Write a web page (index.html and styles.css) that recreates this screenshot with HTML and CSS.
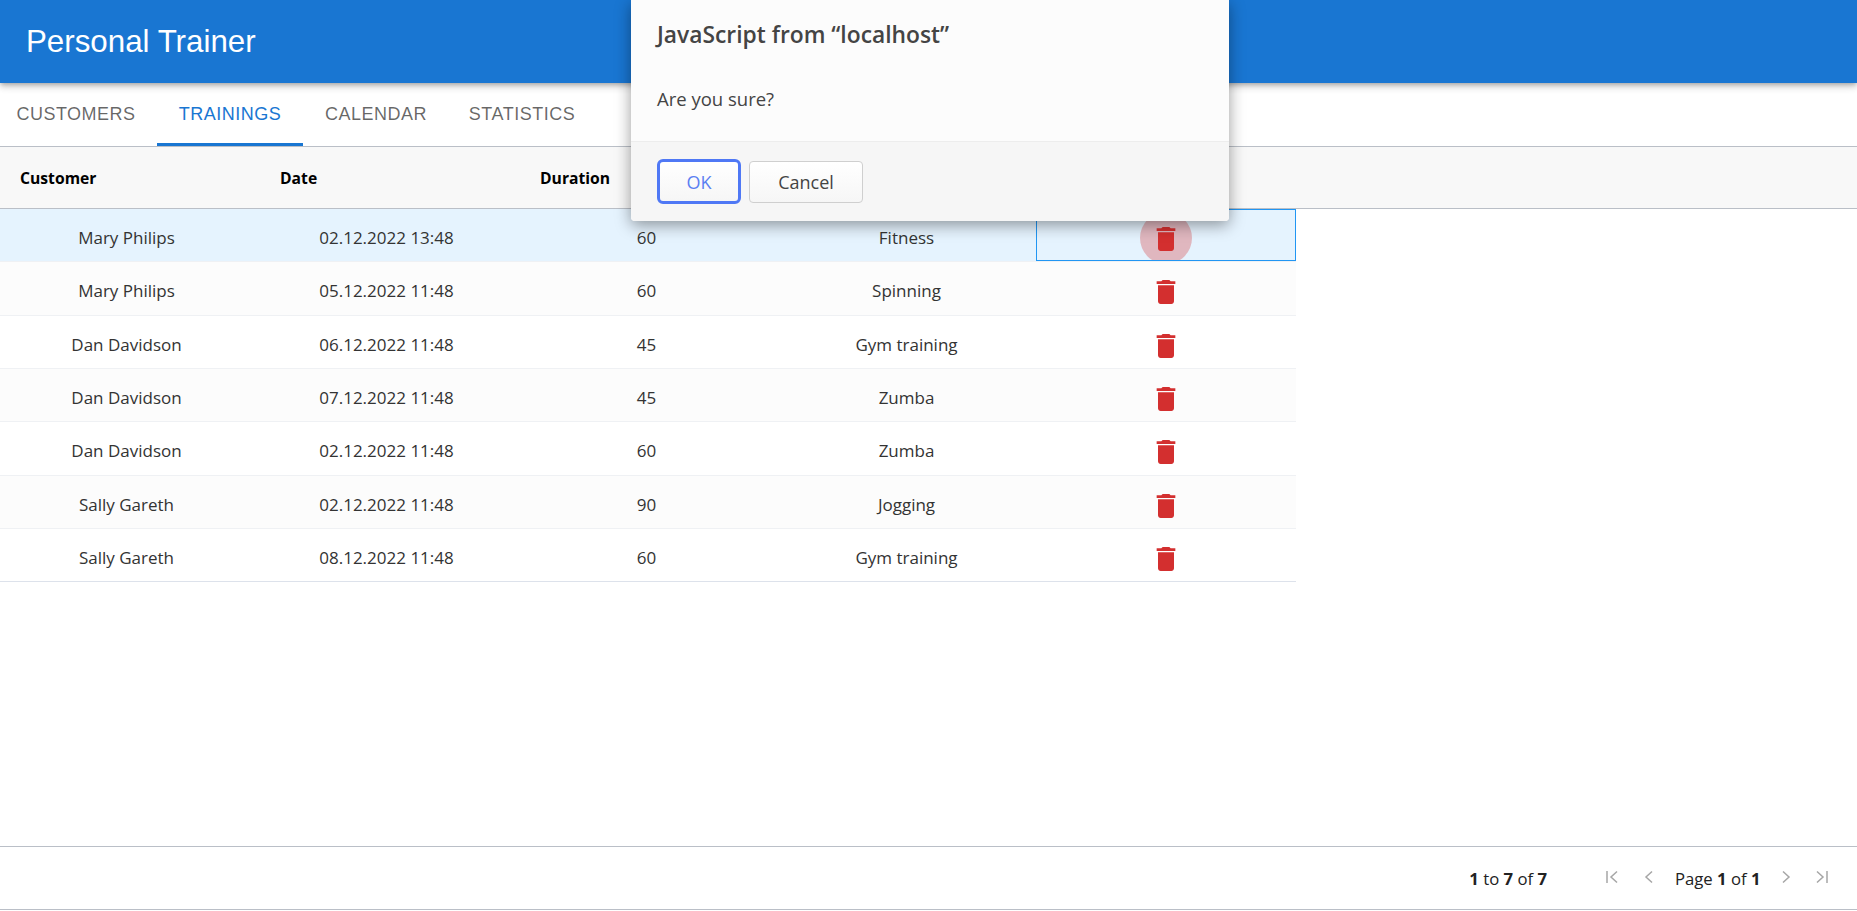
FILE: index.html
```html
<!DOCTYPE html>
<html lang="en">
    <head>
        <meta charset="UTF-8" />
        <title>Personal Trainer</title>
        <link rel="stylesheet" href="styles.css">
    </head>
    <body>
        <div class="app">
            <header class="appbar">
                <h1 class="appbar-title">Personal Trainer</h1>
            </header>

            <nav class="tabs">
                <a class="tab tab-first">CUSTOMERS</a>
                <a class="tab tab-active">TRAININGS</a>
                <a class="tab">CALENDAR</a>
                <a class="tab">STATISTICS</a>
            </nav>

            <div class="grid">
                <div class="grid-header">
                    <div class="header-cell">Customer</div>
                    <div class="header-cell">Date</div>
                    <div class="header-cell">Duration</div>
                </div>

                <div class="grid-body">
                    <div class="row row-selected">
                        <div class="cell">Mary Philips</div>
                        <div class="cell">02.12.2022 13:48</div>
                        <div class="cell">60</div>
                        <div class="cell">Fitness</div>
                        <div class="cell-action cell-focus">
                            <button class="delete-btn delete-btn-pressed"><svg class="delete-icon" viewBox="0 0 24 24"><path d="M6 19c0 1.1.9 2 2 2h8c1.1 0 2-.9 2-2V7H6v12zM19 4h-3.5l-1-1h-5l-1 1H5v2h14V4z"/></svg></button>
                        </div>
                    </div>
                    <div class="row row-odd">
                        <div class="cell">Mary Philips</div>
                        <div class="cell">05.12.2022 11:48</div>
                        <div class="cell">60</div>
                        <div class="cell">Spinning</div>
                        <div class="cell-action">
                            <button class="delete-btn"><svg class="delete-icon" viewBox="0 0 24 24"><path d="M6 19c0 1.1.9 2 2 2h8c1.1 0 2-.9 2-2V7H6v12zM19 4h-3.5l-1-1h-5l-1 1H5v2h14V4z"/></svg></button>
                        </div>
                    </div>
                    <div class="row">
                        <div class="cell">Dan Davidson</div>
                        <div class="cell">06.12.2022 11:48</div>
                        <div class="cell">45</div>
                        <div class="cell">Gym training</div>
                        <div class="cell-action">
                            <button class="delete-btn"><svg class="delete-icon" viewBox="0 0 24 24"><path d="M6 19c0 1.1.9 2 2 2h8c1.1 0 2-.9 2-2V7H6v12zM19 4h-3.5l-1-1h-5l-1 1H5v2h14V4z"/></svg></button>
                        </div>
                    </div>
                    <div class="row row-odd">
                        <div class="cell">Dan Davidson</div>
                        <div class="cell">07.12.2022 11:48</div>
                        <div class="cell">45</div>
                        <div class="cell">Zumba</div>
                        <div class="cell-action">
                            <button class="delete-btn"><svg class="delete-icon" viewBox="0 0 24 24"><path d="M6 19c0 1.1.9 2 2 2h8c1.1 0 2-.9 2-2V7H6v12zM19 4h-3.5l-1-1h-5l-1 1H5v2h14V4z"/></svg></button>
                        </div>
                    </div>
                    <div class="row">
                        <div class="cell">Dan Davidson</div>
                        <div class="cell">02.12.2022 11:48</div>
                        <div class="cell">60</div>
                        <div class="cell">Zumba</div>
                        <div class="cell-action">
                            <button class="delete-btn"><svg class="delete-icon" viewBox="0 0 24 24"><path d="M6 19c0 1.1.9 2 2 2h8c1.1 0 2-.9 2-2V7H6v12zM19 4h-3.5l-1-1h-5l-1 1H5v2h14V4z"/></svg></button>
                        </div>
                    </div>
                    <div class="row row-odd">
                        <div class="cell">Sally Gareth</div>
                        <div class="cell">02.12.2022 11:48</div>
                        <div class="cell">90</div>
                        <div class="cell">Jogging</div>
                        <div class="cell-action">
                            <button class="delete-btn"><svg class="delete-icon" viewBox="0 0 24 24"><path d="M6 19c0 1.1.9 2 2 2h8c1.1 0 2-.9 2-2V7H6v12zM19 4h-3.5l-1-1h-5l-1 1H5v2h14V4z"/></svg></button>
                        </div>
                    </div>
                    <div class="row">
                        <div class="cell">Sally Gareth</div>
                        <div class="cell">08.12.2022 11:48</div>
                        <div class="cell">60</div>
                        <div class="cell">Gym training</div>
                        <div class="cell-action">
                            <button class="delete-btn"><svg class="delete-icon" viewBox="0 0 24 24"><path d="M6 19c0 1.1.9 2 2 2h8c1.1 0 2-.9 2-2V7H6v12zM19 4h-3.5l-1-1h-5l-1 1H5v2h14V4z"/></svg></button>
                        </div>
                    </div>
                </div>

                <div class="paging">
                    <span class="paging-count"><b>1</b> to <b>7</b> of <b>7</b></span>
                    <svg class="paging-icon paging-first" viewBox="0 0 12 14"><path d="M1 1v12M11 1.500 5 7l6 5.500"/></svg>
                    <svg class="paging-icon paging-prev" viewBox="0 0 9 14"><path d="M8 1.500 2 7l6 5.500"/></svg>
                    <span class="paging-page">Page <b>1</b> of <b>1</b></span>
                    <svg class="paging-icon paging-next" viewBox="0 0 9 14"><path d="M1 1.500 7 7l-6 5.500"/></svg>
                    <svg class="paging-icon paging-last" viewBox="0 0 12 14"><path d="M11 1v12M1 1.500 7 7l-6 5.500"/></svg>
                </div>
            </div>
        </div>

        <div class="dialog">
            <div class="dialog-main">
                <h2 class="dialog-title">JavaScript from “localhost”</h2>
                <p class="dialog-text">Are you sure?</p>
            </div>
            <div class="dialog-footer">
                <button class="dialog-btn dialog-ok">OK</button>
                <button class="dialog-btn">Cancel</button>
            </div>
        </div>
    </body>
</html>
```

FILE: styles.css
```css
* {
    box-sizing: border-box;
}

body {
    margin: 0;
    font-family: "Open Sans", "Noto Sans", sans-serif;
    background-color: #fff;
    color: #181d1f;
    overflow: hidden;
}

.app {
    height: 911px;
    display: flex;
    flex-direction: column;
}

.appbar {
    height: 83px;
    flex: none;
    display: flex;
    align-items: center;
    padding-left: 26px;
    background-color: #1976d2;
    box-shadow: 0 2px 4px -1px rgba(0, 0, 0, 0.2), 0 4px 6px 0 rgba(0, 0, 0, 0.14), 0 1px 11px 0 rgba(0, 0, 0, 0.12);
    position: relative;
}

.appbar-title {
    margin: 0;
    font-family: "Liberation Sans", Arial, sans-serif;
    font-size: 31.300px;
    font-weight: 400;
    color: #fff;
}

.tabs {
    height: 64px;
    flex: none;
    display: flex;
    border-bottom: 1px solid #babfc7;
    font-family: "Liberation Sans", Arial, sans-serif;
}

.tab {
    width: 146px;
    height: 63px;
    display: flex;
    align-items: center;
    justify-content: center;
    font-size: 18px;
    letter-spacing: 0.5px;
    color: rgba(0, 0, 0, 0.6);
    padding-bottom: 1px;
}

.tab-first {
    width: 157px;
    padding-right: 5px;
}

.tab-active {
    color: #1976d2;
    border-bottom: 3px solid #1976d2;
    padding-bottom: 0;
    padding-top: 2px;
}

.grid {
    flex: 1;
    display: flex;
    flex-direction: column;
    border-bottom: 1px solid #babfc7;
    margin-bottom: 1px;
}

.grid-header {
    height: 62px;
    flex: none;
    display: grid;
    grid-template-columns: repeat(5, 260px);
    align-items: center;
    background-color: #f8f8f8;
    border-bottom: 1px solid #babfc7;
}

.header-cell {
    justify-self: start;
    margin-left: 20px;
    font-size: 15.700px;
    font-weight: 700;
    color: #000;
}

.grid-body {
    flex: 1;
    width: 1296px;
}

.row {
    height: 53.33px;
    display: grid;
    grid-template-columns: 260px 260px 260px 256px 260px;
    border-bottom: 1px solid #eff1f4;
    background-color: #fff;
}

.row:last-child {
    border-bottom-color: #dde2eb;
}

.row-odd {
    background-color: #fcfcfc;
}

.row-selected {
    background-color: #e5f3fe;
}

.cell {
    display: flex;
    align-items: center;
    justify-content: center;
    padding-right: 7px;
    padding-top: 4.500px;
    font-size: 17px;
    color: #333;
}

.cell:nth-child(4) {
    padding-right: 3px;
}

.cell-action {
    display: flex;
    align-items: flex-start;
    justify-content: center;
    padding-top: 3px;
    overflow: hidden;
}

.cell-focus {
    border: 1px solid #2196f3;
    padding-top: 2px;
}

.delete-btn {
    width: 52px;
    height: 52px;
    flex: none;
    display: flex;
    align-items: center;
    justify-content: center;
    padding: 2px 0 0;
    border: 0;
    border-radius: 50%;
    background: none;
}

.delete-btn-pressed {
    background-color: rgba(211, 47, 47, 0.3);
}

.delete-icon {
    width: 32px;
    height: 32px;
    fill: #d32f2f;
}

.paging {
    height: 63px;
    flex: none;
    display: flex;
    align-items: center;
    justify-content: flex-end;
    padding-right: 29px;
    border-top: 1px solid #babfc7;
    font-size: 16.700px;
    color: #222;
}

.paging b {
    font-weight: 700;
}

.paging-count {
    margin-right: 59px;
}

.paging-icon {
    height: 14px;
    margin-bottom: 3px;
    fill: none;
    stroke: #a6a6a6;
    stroke-width: 1.500;
}

.paging-first {
    width: 12px;
}

.paging-prev,
.paging-next {
    width: 9px;
}

.paging-prev {
    margin-left: 26px;
}

.paging-page {
    margin: 0 21.500px 0 22px;
}

.paging-last {
    width: 12px;
    margin-left: 25px;
}

.dialog {
    position: absolute;
    top: 0;
    left: 631px;
    width: 598px;
    height: 221px;
    display: flex;
    flex-direction: column;
    background-color: #fcfcfc;
    border-radius: 0 0 4px 4px;
    box-shadow: 0 4px 16px rgba(0, 0, 0, 0.4);
    overflow: hidden;
}

.dialog-main {
    height: 142px;
    flex: none;
    padding: 19px 26px 0;
    border-bottom: 1px solid #ededed;
}

.dialog-title {
    margin: 0;
    font-size: 22.800px;
    line-height: 32px;
    font-weight: 600;
    color: #444;
}

.dialog-text {
    margin: 36px 0 0;
    font-size: 18.500px;
    line-height: 24px;
    color: #444;
}

.dialog-footer {
    flex: 1;
    display: flex;
    align-items: center;
    gap: 8px;
    padding: 0 26px;
    background-color: #f6f6f6;
}

.dialog-btn {
    width: 114px;
    height: 42px;
    font-family: inherit;
    font-size: 18px;
    color: #444;
    background: linear-gradient(#fff, #f6f6f6);
    border: 1px solid #cfcfcf;
    border-radius: 4px;
}

.dialog-ok {
    width: 84px;
    height: 45px;
    color: #5b7ff2;
    border: 3px solid #4f78f5;
    border-radius: 6px;
}
```
